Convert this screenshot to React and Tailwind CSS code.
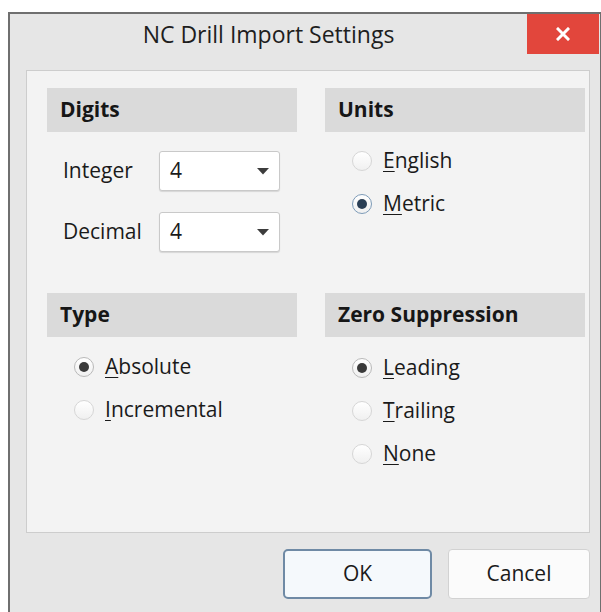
import React from 'react';

const font = { fontFamily: '"Open Sans", "Noto Sans", Arial, sans-serif' };

// access-key label: first matching letter is underlined
const AccessLabel = ({ text, k }) => {
  const i = text.indexOf(k);
  return (
    <span>
      {text.slice(0, i)}
      <span className="underline underline-offset-[3px] decoration-1">{text[i]}</span>
      {text.slice(i + 1)}
    </span>
  );
};

const Radio = ({ label, k, checked, focused }) => (
  <div className="flex items-center h-[43px] pl-[27px] gap-[11px]">
    <div
      className={`w-[20px] h-[20px] rounded-full border flex items-center justify-center bg-gradient-to-b from-white to-[#f0f0f0] ${
        focused ? 'border-[#7d9bb8]' : checked ? 'border-[#b9b9b9]' : 'border-[#d6d6d6]'
      }`}
    >
      {checked && (
        <div className={`w-[10px] h-[10px] rounded-full ${focused ? 'bg-[#2b3f55]' : 'bg-[#3a3a3a]'}`} />
      )}
    </div>
    <span className="text-[21px] text-[#1a1a1a]">
      <AccessLabel text={label} k={k} />
    </span>
  </div>
);

const Band = ({ children }) => (
  <div className="h-[44px] bg-[#dadada] flex items-center pl-[13px] text-[21px] font-bold text-[#161616]">
    {children}
  </div>
);

const Select = ({ value }) => (
  <div className="w-[121px] h-[40px] bg-white border border-[#c9c9c9] rounded-[3px] shadow-[0_1px_1px_rgba(0,0,0,0.12)] flex items-center justify-between pl-[10px] pr-[10px]">
    <span className="text-[21px] text-[#1a1a1a]">{value}</span>
    <svg width="12" height="7" viewBox="0 0 12 7">
      <path d="M0 0 L12 0 L6 6.5 Z" fill="#3c3c3c" />
    </svg>
  </div>
);

export default function App() {
  return (
    <div className="min-h-screen bg-white pt-[12px] pl-[8px]" style={font}>
      <div className="w-[593px] h-[600px] bg-[#e6e6e6] border-l-2 border-t-2 border-r border-[#6f6f6f]">
        {/* title bar */}
        <div className="flex h-[40px] pr-[1px]">
          <div className="flex-1 flex items-center justify-center text-[23px] text-[#1e1e1e] pt-[1px]">
            NC Drill Import Settings
          </div>
          <div className="w-[72px] bg-[#e2463c] flex items-center justify-center">
            <svg width="14" height="14" viewBox="0 0 14 14">
              <path d="M2 2 L12 12 M12 2 L2 12" stroke="#fff" strokeWidth="3" strokeLinecap="square" />
            </svg>
          </div>
        </div>

        {/* settings panel */}
        <div className="ml-[16px] mt-[16px] w-[564px] h-[463px] bg-[#f3f3f3] border border-[#cdcdcd] pl-[20px] pt-[17px]">
          <div className="grid grid-cols-[250px_260px] gap-x-[28px]">
            <div>
              <Band>Digits</Band>
              <div className="flex items-center mt-[19px] pl-[16px] text-[21px] text-[#1a1a1a]">
                <span className="w-[96px]">Integer</span>
                <Select value="4" />
              </div>
              <div className="flex items-center mt-[21px] pl-[16px] text-[21px] text-[#1a1a1a]">
                <span className="w-[96px]">Decimal</span>
                <Select value="4" />
              </div>
            </div>
            <div>
              <Band>Units</Band>
              <div className="mt-[7px]">
                <Radio label="English" k="E" />
                <Radio label="Metric" k="M" checked focused />
              </div>
            </div>
          </div>

          <div className="grid grid-cols-[250px_260px] gap-x-[28px] mt-[41px]">
            <div>
              <Band>Type</Band>
              <div className="mt-[8px]">
                <Radio label="Absolute" k="A" checked />
                <Radio label="Incremental" k="I" />
              </div>
            </div>
            <div>
              <Band>Zero Suppression</Band>
              <div className="mt-[9px]">
                <Radio label="Leading" k="L" checked />
                <Radio label="Trailing" k="T" />
                <Radio label="None" k="N" />
              </div>
            </div>
          </div>
        </div>

        {/* dialog buttons */}
        <div className="flex justify-end gap-[16px] mt-[16px] w-[580px]">
          <button className="w-[149px] h-[50px] rounded-[5px] border-2 border-[#6f8aa5] bg-[#f5f9fc] text-[21px] text-[#1a1a1a]">
            OK
          </button>
          <button className="w-[142px] h-[50px] rounded-[4px] border border-[#d2d2d2] bg-[#fbfbfb] text-[21px] text-[#1a1a1a]">
            Cancel
          </button>
        </div>
      </div>
    </div>
  );
}
